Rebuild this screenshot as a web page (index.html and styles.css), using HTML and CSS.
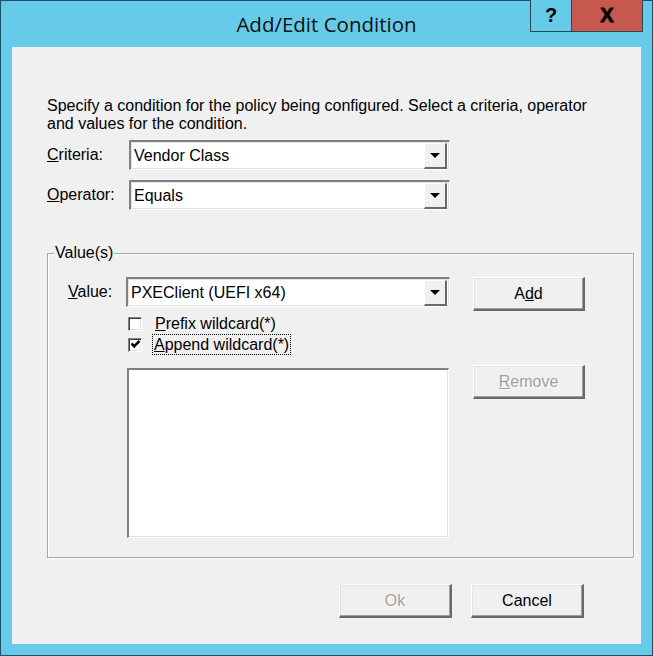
FILE: index.html
```html
<!DOCTYPE html>
<html>
<head>
<meta charset="utf-8">
<link rel="stylesheet" href="styles.css">
</head>
<body>
<div class="window">
  <div class="titlebar">
    <div class="title">Add/Edit Condition</div>
    <div class="caption-buttons">
      <div class="cap-btn help">?</div>
      <div class="cap-btn close">X</div>
    </div>
  </div>
  <div class="client">
    <div class="desc">Specify a condition for the policy being configured. Select a criteria, operator and values for the condition.</div>
    <div class="form-row first">
      <div class="label"><u>C</u>riteria:</div>
      <div class="combo wide"><span class="combo-text">Vendor Class</span><span class="drop"><span class="tri"></span></span></div>
    </div>
    <div class="form-row">
      <div class="label"><u>O</u>perator:</div>
      <div class="combo wide"><span class="combo-text">Equals</span><span class="drop"><span class="tri"></span></span></div>
    </div>
    <div class="group">
      <div class="legend">Value(s)</div>
      <div class="value-row">
        <div class="vlabel"><u>V</u>alue:</div>
        <div class="combo narrow"><span class="combo-text">PXEClient (UEFI x64)</span><span class="drop"><span class="tri"></span></span></div>
        <div class="btn add">A<u>d</u>d</div>
      </div>
      <div class="check-row first">
        <span class="checkbox"></span>
        <span class="check-label"><u>P</u>refix wildcard(*)</span>
      </div>
      <div class="check-row">
        <span class="checkbox checked"><svg width="9" height="9" viewBox="0 0 9 9"><path d="M0.5 3.5 L3.2 6.3 L8.5 1" fill="none" stroke="#000" stroke-width="2.6"/></svg></span>
        <span class="check-label focus"><u>A</u>ppend wildcard(*)</span>
      </div>
      <div class="list-row">
        <div class="listbox"></div>
        <div class="btn remove disabled"><u>R</u>emove</div>
      </div>
    </div>
    <div class="bottom-row">
      <div class="btn disabled">Ok</div>
      <div class="btn">Cancel</div>
    </div>
  </div>
</div>
</body>
</html>
```
FILE: styles.css
```css
* { box-sizing: border-box; }
html, body { margin: 0; padding: 0; background: #65cbe9; }
body { font-family: "Liberation Sans", Arial, sans-serif; font-size: 16px; color: #000; }

.window {
  width: 653px;
  height: 656px;
  border: 1px solid #1d4f69;
  background: #65cbe9;
  display: flex;
  flex-direction: column;
}

.titlebar {
  height: 46px;
  position: relative;
  flex: none;
}
.title {
  font-family: "Open Sans", "Noto Sans", sans-serif;
  font-size: 20.5px;
  color: #111;
  text-align: center;
  padding-top: 8px;
  line-height: 30px;
}
.caption-buttons {
  position: absolute;
  top: -1px;
  right: 9px;
  display: flex;
}
.cap-btn {
  height: 32px;
  display: flex;
  align-items: center;
  justify-content: center;
  font-family: "Liberation Sans", Arial, sans-serif;
  font-weight: bold;
  color: #000;
  border-bottom: 1px solid #2a4656;
}
.help {
  width: 42px;
  border-left: 1px solid #2a4656;
  border-right: 1px solid #2a4656;
  font-size: 20px;
  background: #65cbe9;
}
.close {
  width: 71px;
  background: #c75850;
  border-right: 1px solid #2a4656;
  font-size: 20px;
  -webkit-text-stroke: 0.8px #000;
}

.client {
  margin: 0 11px 11px 11px;
  height: 597px;
  background: #f0f0f0;
  padding: 50px 0 0 35px;
}

.desc {
  line-height: 18px;
  width: 548px;
}

.form-row {
  display: flex;
  align-items: center;
  margin-top: 10px;
}
.form-row.first { margin-top: 7px; }
.label { width: 82px; }

.combo {
  height: 30px;
  display: flex;
  align-items: center;
  background: #fff;
  border-top: 2px solid #808080;
  border-left: 2px solid #808080;
  border-right: 1px solid #fff;
  border-bottom: 1px solid #fff;
  box-shadow: 1px 1px 0 #e3e3e3 inset, -1px -1px 0 #e3e3e3 inset;
  padding: 0 2px 0 3px;
}
.combo.wide { width: 321px; }
.combo.narrow { width: 324px; }
.combo-text { flex: 1; white-space: nowrap; }
.drop {
  width: 23px;
  height: 26px;
  background: #f0f0f0;
  border-top: 1px solid #fff;
  border-left: 1px solid #fff;
  border-right: 2px solid #696969;
  border-bottom: 2px solid #696969;
  display: flex;
  align-items: center;
  justify-content: center;
}
.tri {
  width: 0;
  height: 0;
  border-left: 5px solid transparent;
  border-right: 5px solid transparent;
  border-top: 5px solid #000;
}

.group {
  margin-top: 43px;
  width: 587px;
  height: 305px;
  border: 1px solid #a8a8a8;
  box-shadow: 1px 1px 0 #fff inset, 1px 1px 0 #fff;
  padding-left: 20px;
}
.legend {
  margin: -10px 0 0 -14px;
  padding: 0 1px;
  line-height: 18px;
  background: #f0f0f0;
  width: max-content;
}
.value-row {
  display: flex;
  align-items: flex-start;
  margin-top: 15px;
}
.vlabel { width: 58px; line-height: 30px; }

.btn {
  width: 112px;
  height: 34px;
  display: flex;
  align-items: center;
  justify-content: center;
  background: #f0f0f0;
  border-top: 1px solid #fff;
  border-left: 1px solid #fff;
  border-right: 2px solid #696969;
  border-bottom: 2px solid #696969;
  box-shadow: -1px -1px 0 #a0a0a0 inset, 1px 1px 0 #e3e3e3 inset;
}
.btn.add { margin-left: 23px; }
.btn.disabled { color: #a0a0a0; text-shadow: 1px 1px 0 #fff; }

.check-row {
  display: flex;
  align-items: center;
  height: 21px;
  padding-left: 60px;
}
.check-row.first { margin-top: 2px; }
.checkbox {
  width: 14px;
  height: 14px;
  background: #fff;
  border-top: 1px solid #808080;
  border-left: 1px solid #808080;
  border-right: 1px solid #fff;
  border-bottom: 1px solid #fff;
  box-shadow: 1px 1px 0 #404040 inset, -1px -1px 0 #e3e3e3 inset;
  display: flex;
  align-items: center;
  justify-content: center;
  flex: none;
}
.check-label { margin-left: 12px; line-height: 17px; padding: 0 1px; }
.check-label.focus { margin-left: 10px; border: 1px dotted #000; padding: 1px 1px; }

.list-row {
  display: flex;
  align-items: flex-start;
  margin-top: 10px;
  padding-left: 59px;
}
.listbox {
  margin-top: 3px;
  width: 322px;
  height: 170px;
  background: #fff;
  border-top: 2px solid #808080;
  border-left: 2px solid #808080;
  border-right: 1px solid #fff;
  border-bottom: 1px solid #fff;
  box-shadow: -1px -1px 0 #e3e3e3 inset;
}
.btn.remove { margin-left: 24px; }

.bottom-row {
  display: flex;
  justify-content: flex-end;
  gap: 19px;
  margin-top: 26px;
  width: 537px;
}
.bottom-row .btn { width: 113px; }
```
